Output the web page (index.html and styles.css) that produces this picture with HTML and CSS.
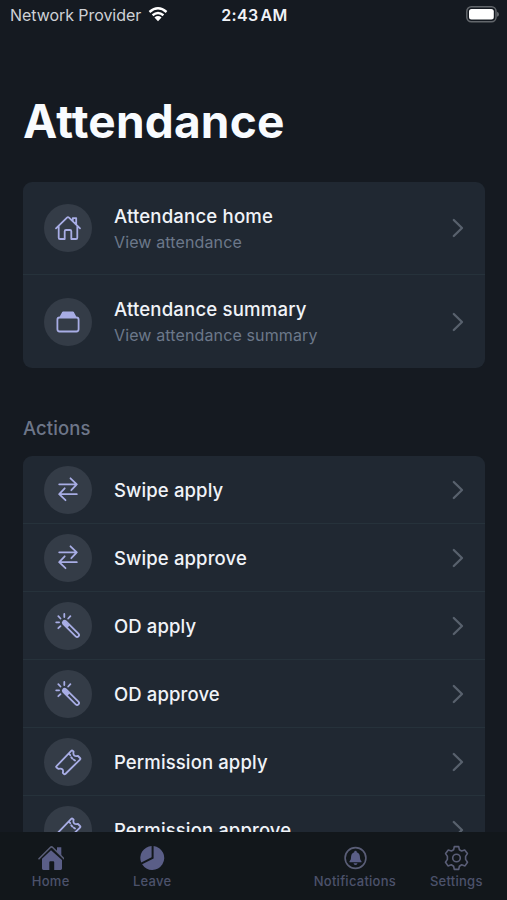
FILE: index.html
```html
<!DOCTYPE html>
<html lang="en">
<head>
<meta charset="utf-8">
<title>Attendance</title>
<link rel="stylesheet" href="styles.css">
</head>
<body>
<svg class="defs" aria-hidden="true">
  <symbol id="home" viewBox="0 0 28 28"><path d="M2 14.3 13 3.6Q14 2.6 15 3.6L26 14.3M4.7 12V23.7Q4.7 25 6 25H10.7V17.3Q10.7 16 12 16H16Q17.3 16 17.3 17.3V25H22Q23.3 25 23.3 23.7V12M18.8 6.5V4.1H22.2V10.3"/></symbol>
  <symbol id="albums" viewBox="0 0 28 28"><rect x="3.4" y="9.5" width="21.2" height="14" rx="2.2"/><path class="solid" d="M9 4.5H19L21.2 8.5H6.8Z"/></symbol>
  <symbol id="swap" viewBox="0 0 28 28"><path d="M5.2 8.3H22.8M16.5 2.3 22.8 8.3 17.3 14.2M22.8 18.2H5.2M11.5 24.2 5.2 18.2 10.7 12.3"/></symbol>
  <symbol id="wand" viewBox="0 0 28 28"><path d="M11.8 9.2 24.4 21.6A1.9 1.9 0 0 1 21.7 24.4L9.2 11.9A1.9 1.9 0 0 1 11.8 9.2ZM10.3 1.9V5M4.3 4.2 6.5 6.5M2.2 10.3H5.1M4.3 16.2 6.5 14.1M16.4 4.2 14.2 6.5"/><path class="solid" d="M10 9.5 14.3 13.5 13.5 14.5 9.5 11Z"/></symbol>
  <symbol id="ticket" viewBox="0 0 28 28"><path d="M2.3 18.4 17.2 2.8Q18 2 18.8 2.8L19.6 3.7Q18.4 8.9 24 8L26 10Q26.8 10.8 26 11.6L11.3 26Q10.5 26.6 9.8 25.9L8.8 24.8Q10.2 19.8 4.6 20.9L2.5 19.4Q1.8 18.9 2.3 18.4ZM15.3 6.2 16.3 7.2M17.3 9.3 18.4 10.6M19.8 11.7 21 12.5"/></symbol>
  <symbol id="chevron" viewBox="0 0 12 20"><path d="M1.8 2 10 10 1.8 18"/></symbol>
</svg>
<div class="screen">
  <header class="status">
    <div class="carrier">Network Provider
      <svg class="wifi" viewBox="0 0 21 16"><path d="M1.4 5.3Q10.5-2.4 19.6 5.3M4.7 8.8Q10.5 4 16.3 8.8"/><path class="dot" d="M6.7 11.1Q10.5 8 14.3 11.1L10.5 15.2Z"/></svg>
    </div>
    <div class="clock">2:43<span>AM</span></div>
    <div class="power"><svg class="battery" viewBox="0 0 33 17"><rect class="shell" x=".8" y=".8" width="29.2" height="15" rx="4.5"/><rect class="charge" x="3" y="3" width="24.8" height="10.6" rx="2.5"/><path class="cap" d="M31 5.8Q33 6.3 33 8.3T31 10.8Z"/></svg></div>
  </header>
  <main class="content">
    <h1>Attendance</h1>
    <section class="card">
      <div class="row tall"><span class="badge"><svg><use href="#home"/></svg></span><div class="text"><b>Attendance home</b><small>View attendance</small></div><svg class="chevron"><use href="#chevron"/></svg></div>
      <div class="row tall"><span class="badge"><svg><use href="#albums"/></svg></span><div class="text"><b>Attendance summary</b><small>View attendance summary</small></div><svg class="chevron"><use href="#chevron"/></svg></div>
    </section>
    <h2>Actions</h2>
    <section class="card">
      <div class="row"><span class="badge"><svg><use href="#swap"/></svg></span><div class="text"><b>Swipe apply</b></div><svg class="chevron"><use href="#chevron"/></svg></div>
      <div class="row"><span class="badge"><svg><use href="#swap"/></svg></span><div class="text"><b>Swipe approve</b></div><svg class="chevron"><use href="#chevron"/></svg></div>
      <div class="row"><span class="badge"><svg><use href="#wand"/></svg></span><div class="text"><b>OD apply</b></div><svg class="chevron"><use href="#chevron"/></svg></div>
      <div class="row"><span class="badge"><svg><use href="#wand"/></svg></span><div class="text"><b>OD approve</b></div><svg class="chevron"><use href="#chevron"/></svg></div>
      <div class="row"><span class="badge"><svg><use href="#ticket"/></svg></span><div class="text"><b>Permission apply</b></div><svg class="chevron"><use href="#chevron"/></svg></div>
      <div class="row"><span class="badge"><svg><use href="#ticket"/></svg></span><div class="text"><b>Permission approve</b></div><svg class="chevron"><use href="#chevron"/></svg></div>
    </section>
  </main>
  <nav class="tabs">
    <div class="tab"><svg viewBox="0 0 26 26"><path class="fill" d="M4 13.8 13 5.2 24 15V23.6Q24 25 22.6 25H16.2V17.3Q16.2 16.3 15.2 16.3H12.3Q11.3 16.3 11.3 17.3V25H5.4Q4 25 4 23.6Z"/><path class="line" d="M1 13.8 12.3 2.5Q13.5 1.3 14.7 2.5L26 13.8"/><path class="fill" d="M19 2.3H23.3V11L19 6.8Z"/></svg>Home</div>
    <div class="tab"><svg viewBox="0 0 26 26"><path class="fill" d="M12.6 1V12.2L2.2 17.5A12 12 0 0 1 12.6 1ZM14.6 1A12 12 0 1 1 3.1 19.3L14.6 13.5Z"/></svg>Leave</div>
    <div class="tab"></div>
    <div class="tab"><svg viewBox="0 0 26 26"><circle class="line" cx="13.5" cy="13" r="10.4"/><path class="fill" d="M13.5 5.8Q14.8 5.8 14.8 7.2C17.5 8 18 10.4 18 13Q18 14.8 19.5 16.2V17.3H7.5V16.2Q9 14.8 9 13C9 10.4 9.5 8 12.2 7.2Q12.2 5.8 13.5 5.8ZM11.5 18.2H15.5Q15.3 20 13.5 20T11.5 18.2Z"/></svg>Notifications</div>
    <div class="tab"><svg viewBox="0 0 26 26"><path class="line" d="M11.3 1.6H15.7L16.4 4.8 18.6 6 21.7 5 24.4 8.6 22.6 11.4V14.4L24.5 17.2 22 20.9 18.7 19.8 16.4 21.2 15.7 24.4H11.3L10.6 21.2 8.3 19.8 5 20.9 2.5 17.2 4.4 14.4V11.4L2.6 8.6 5.3 5 8.4 6 10.6 4.8Z"/><circle class="line" cx="13.5" cy="13" r="3.8"/></svg>Settings</div>
  </nav>
</div>
</body>
</html>
```
FILE: styles.css
```css
* { box-sizing: border-box; }
body { margin: 0; background: #151a21; font-family: Inter, sans-serif; }
svg { display: block; fill: none; stroke-linecap: round; stroke-linejoin: round; }
.defs { display: none; }
.screen { height: 900px; display: flex; flex-direction: column; overflow: hidden; color: #f0f3f8; }
.status { height: 29px; flex: none; display: grid; grid-template-columns: 1fr auto 1fr; align-items: center; padding: 0 8px 0 10px; font-size: 16px; }
.carrier { display: flex; align-items: center; gap: 7px; color: #ced1d6; letter-spacing: -.06px; white-space: nowrap; }
.wifi { width: 20px; height: 15px; stroke: #fff; stroke-width: 2.6; stroke-linecap: butt; }
.wifi .dot { fill: #fff; stroke: none; }
.clock { font-weight: 600; letter-spacing: .35px; }
.clock span { margin-left: 2px; }
.power { display: flex; justify-content: flex-end; }
.battery { width: 33px; height: 17px; }
.shell { stroke: #62666b; stroke-width: 1.5; }
.charge { fill: #fff; }
.cap { fill: #62666b; }
.content { flex: 1; min-height: 0; overflow: hidden; padding: 0 22px 0 23px; }
h1 { margin: 65px 0 0; height: 88px; font-size: 46px; line-height: 54px; font-weight: 700; letter-spacing: .2px; color: #f8fbfe; }
.card { border-radius: 9px; background: #202832; overflow: hidden; }
.row { height: 68px; display: flex; align-items: center; padding: 0 21px; border-bottom: 1px solid #26323b; }
.row:last-child { border-bottom: 0; }
.tall { height: 93px; }
.badge { width: 48px; height: 48px; flex: none; border-radius: 50%; background: #343c47; display: grid; place-items: center; }
.badge svg { width: 28px; height: 28px; stroke: #a8ade5; stroke-width: 1.8; }
.badge .solid, .solid { fill: #a8ade5; }
.text { flex: 1; margin-left: 22px; }
b { display: block; font-size: 18.5px; line-height: 26px; font-weight: 500; letter-spacing: .12px; }
.tall b { font-size: 18.6px; letter-spacing: .17px; }
small { display: block; font-size: 16px; line-height: 24px; margin-top: 1px; letter-spacing: .13px; color: #6c788a; }
.chevron { width: 12px; height: 20px; stroke: #58616d; stroke-width: 2.3; }
h2 { margin: 48px 0 15px; font-size: 18.5px; line-height: 25px; font-weight: 500; letter-spacing: .1px; color: #6d7689; }
.tabs { height: 68px; flex: none; display: grid; grid-template-columns: repeat(5, 1fr); background: #12171b; color: #4c526b; font-size: 13px; line-height: 17px; font-weight: 500; letter-spacing: .25px; }
.tab { display: flex; flex-direction: column; align-items: center; padding-top: 13px; gap: 2px; }
.tab svg { width: 26px; height: 26px; }
.fill { fill: #5a5e87; }
.line { stroke: #5a5e77; stroke-width: 1.6; }
```
